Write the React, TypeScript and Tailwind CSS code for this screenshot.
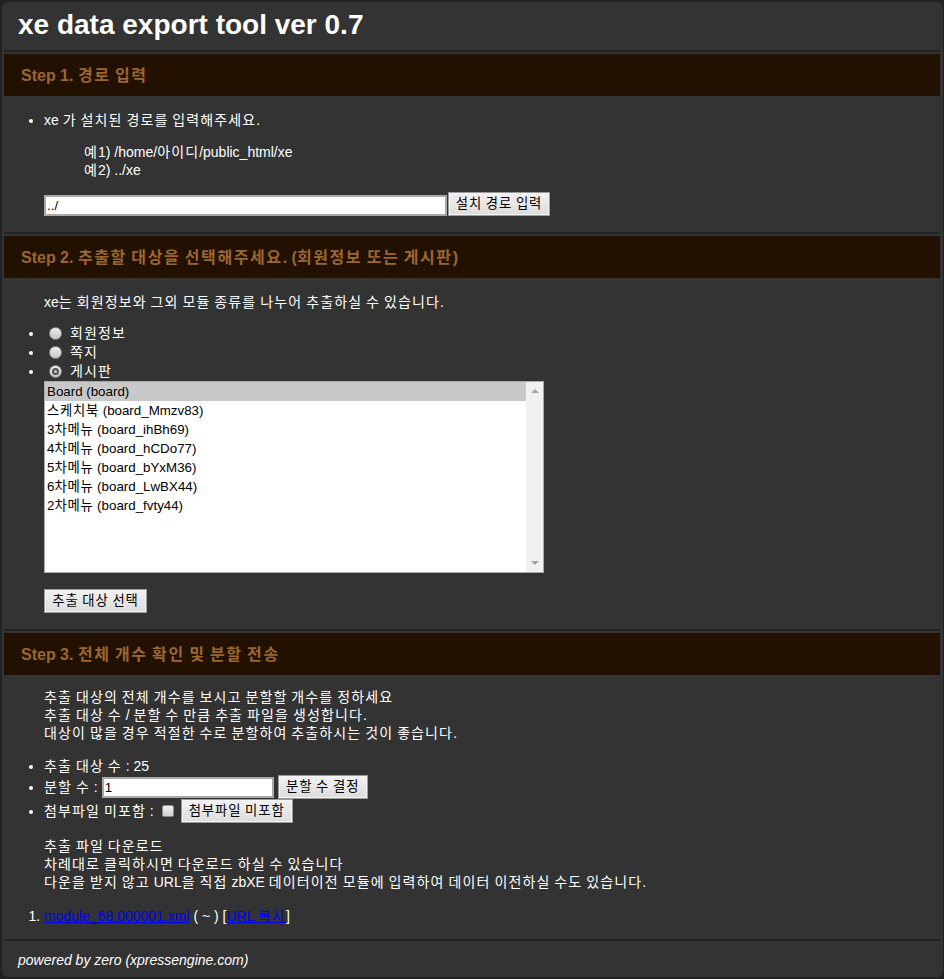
import type { ReactNode } from 'react';

const boards = [
  'Board (board)',
  '스케치북 (board_Mmzv83)',
  '3차메뉴 (board_ihBh69)',
  '4차메뉴 (board_hCDo77)',
  '5차메뉴 (board_bYxM36)',
  '6차메뉴 (board_LwBX44)',
  '2차메뉴 (board_fvty44)',
];

// hangul in Noto CJK is narrower than the reference font, so widen only the hangul runs
function Ko({ children, track = 'tracking-[0.08em]' }: { children: string; track?: string }) {
  const parts = children.split(/([\uAC00-\uD7A3]+)/);
  return (
    <>
      {parts.map((p, i) =>
        i % 2 === 1 ? (
          <span key={i} className={track}>
            {p}
          </span>
        ) : (
          p
        ),
      )}
    </>
  );
}

function StepBar({ children }: { children: string }) {
  return (
    <>
      <div className="h-[2px] bg-[#222]" />
      <h2 className="mt-[2px] h-[42px] bg-[#221100] pl-[17px] pt-[13px] text-[16px] font-bold leading-[18px] text-[#9c6630]">
        <Ko track="tracking-[0.1em]">{children}</Ko>
      </h2>
    </>
  );
}

function Button({ children, width }: { children: string; width: string }) {
  return (
    <button
      className={`${width} h-[24px] border border-[#9a9a9a] bg-linear-to-b from-[#f2f2f2] to-[#dcdcdc] text-center font-['Liberation_Sans','Noto_Sans_CJK_KR',sans-serif] text-[13.33px] leading-[16px] text-black shadow-[inset_0_0_0_1px_#f4f4f4]`}
    >
      <Ko track="tracking-[0.07em]">{children}</Ko>
    </button>
  );
}

function Radio({ checked }: { checked?: boolean }) {
  return (
    <span className="ml-[5px] mr-[8px] mt-[3px] inline-flex h-[13px] w-[13px] items-center justify-center rounded-full border border-[#8c8c8c] bg-linear-to-b from-[#ececec] to-[#c6c6c6] align-top">
      {checked && <span className="h-[7px] w-[7px] rounded-full border-2 border-[#555] bg-[#c8c8c8]" />}
    </span>
  );
}

export default function App() {
  return (
    <div className="min-h-[979px] bg-[#222] py-[2px] font-['Liberation_Sans','Noto_Sans_CJK_KR',sans-serif] text-white">
      <div className="ml-[2px] w-[941px] rounded-[6px] bg-[#333] pb-[8px] pl-[2px] pr-[3px]">
        <div className="h-[48px] pl-[14px] pt-[7px]">
          <h1 className="text-[28px] font-bold leading-[32px] text-white">xe data export tool ver 0.7</h1>
        </div>

        {/* step 1 */}
        <StepBar>Step 1. 경로 입력</StepBar>
        <ul className="mb-[16px] mt-[15px] list-disc pl-10 text-[14px] leading-[18px]">
          <li>
            <Ko>xe 가 설치된 경로를 입력해주세요.</Ko>
            <blockquote className="ml-10 mt-[14px]">
              <Ko>예1) /home/아이디/public_html/xe</Ko>
              <br />
              <Ko>예2) ../xe</Ko>
            </blockquote>
            <div className="mt-[13px] flex items-end">
              <input
                defaultValue="../"
                className="h-[21px] w-[403px] border-2 border-[#a8a8a8] bg-white px-px text-[13.33px] text-black outline-none"
              />
              <span className="ml-px">
                <Button width="w-[102px]">설치 경로 입력</Button>
              </span>
            </div>
          </li>
        </ul>

        {/* step 2 */}
        <StepBar>Step 2. 추출할 대상을 선택해주세요. (회원정보 또는 게시판)</StepBar>
        <div className="mb-[16px] text-[14px] leading-[18px]">
          <p className="mt-[15px] pl-10">
            <Ko>xe는 회원정보와 그외 모듈 종류를 나누어 추출하실 수 있습니다.</Ko>
          </p>
          <ul className="mt-[13px] list-disc pl-10 leading-[19px]">
            <li>
              <Radio />
              <Ko>회원정보</Ko>
            </li>
            <li>
              <Radio />
              <Ko>쪽지</Ko>
            </li>
            <li>
              <Radio checked />
              <Ko>게시판</Ko>
            </li>
          </ul>
          <div className="pl-10">
            <div className="flex h-[192px] w-[500px] border border-[#a9a9a9] bg-white text-[13.33px] leading-[19px] text-black">
              <div className="flex-1">
                {boards.map((b, i) => (
                  <div key={b} className={i === 0 ? 'bg-[#c8c8c8] pl-[2px]' : 'pl-[2px]'}>
                    <Ko track="tracking-[0.055em]">{b}</Ko>
                  </div>
                ))}
              </div>
              <div className="flex w-[17px] flex-col items-center justify-between bg-[#f1f1f1] py-[7px]">
                <span className="h-0 w-0 border-x-[4px] border-b-[4px] border-x-transparent border-b-[#a3a3a3]" />
                <span className="h-0 w-0 border-x-[4px] border-t-[4px] border-x-transparent border-t-[#a3a3a3]" />
              </div>
            </div>
            <div className="mt-[16px]">
              <Button width="w-[103px]">추출 대상 선택</Button>
            </div>
          </div>
        </div>

        {/* step 3 */}
        <StepBar>Step 3. 전체 개수 확인 및 분할 전송</StepBar>
        <div className="mb-[14px] text-[14px] leading-[18px]">
          <p className="mt-[13px] pl-10">
            <Ko>추출 대상의 전체 개수를 보시고 분할할 개수를 정하세요</Ko>
            <br />
            <Ko>추출 대상 수 / 분할 수 만큼 추출 파일을 생성합니다.</Ko>
            <br />
            <Ko>대상이 많을 경우 적절한 수로 분할하여 추출하시는 것이 좋습니다.</Ko>
          </p>
          <ul className="mt-[15px] list-disc pl-10">
            <li>
              <Ko>추출 대상 수 : 25</Ko>
            </li>
            <li>
              <span className="inline-flex h-[24px] items-center">
                <span>
                  <Ko>분할 수 :</Ko>
                </span>
                <input
                  defaultValue="1"
                  className="ml-[4px] h-[21px] w-[172px] border-2 border-[#a8a8a8] bg-white px-px text-[13.33px] text-black outline-none"
                />
                <span className="ml-[4px]">
                  <Button width="w-[90px]">분할 수 결정</Button>
                </span>
              </span>
            </li>
            <li>
              <span className="inline-flex h-[24px] items-center">
                <span>
                  <Ko>첨부파일 미포함 :</Ko>
                </span>
                <span className="ml-[8px] mr-[7px] h-[12px] w-[12px] rounded-[2px] border border-[#8c8c8c] bg-linear-to-b from-[#f0f0f0] to-[#cfcfcf]" />
                <Button width="w-[112px]">첨부파일 미포함</Button>
              </span>
            </li>
          </ul>
          <p className="mt-[14px] pl-10">
            <Ko>추출 파일 다운로드</Ko>
            <br />
            <Ko>차례대로 클릭하시면 다운로드 하실 수 있습니다</Ko>
            <br />
            <Ko>다운을 받지 않고 URL을 직접 zbXE 데이터이전 모듈에 입력하여 데이터 이전하실 수도 있습니다.</Ko>
          </p>
          <ol className="mt-[16px] list-decimal pl-10">
            <li>
              <a href="#" className="text-[#0000ee] underline">
                module_68.000001.xml
              </a>{' '}
              ( ~ ) [
              <a href="#" className="text-[#0000ee] underline">
                <Ko>URL 복사</Ko>
              </a>
              ]
            </li>
          </ol>
        </div>

        {/* footer */}
        <div className="h-[2px] bg-[#222]" />
        <p className="pl-[14px] pt-[10px] text-[14px] italic leading-[18px]">powered by zero (xpressengine.com)</p>
      </div>
    </div>
  );
}
